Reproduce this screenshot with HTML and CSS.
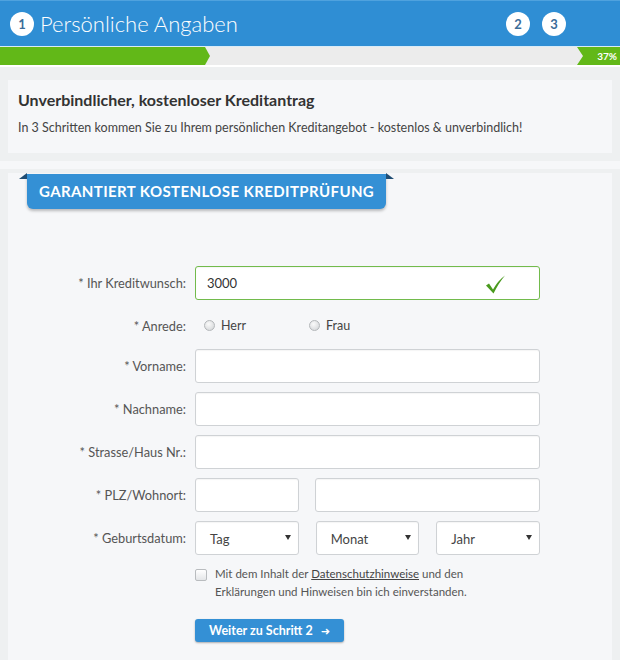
FILE: index.html
```html
<!DOCTYPE html>
<html>
<head>
  <meta charset="utf-8">
  <link rel="stylesheet" href="styles.css">
</head>
<body>
  <header class="steps">
    <span class="step-num">1</span>
    <h1 class="step-title">Persönliche Angaben</h1>
    <div class="step-next">
      <span class="step-num">2</span>
      <span class="step-num">3</span>
    </div>
  </header>

  <div class="progress">
    <div class="progress-fill" style="width: 210px"></div>
    <div class="progress-tag">37%</div>
  </div>

  <section class="intro-wrap">
    <div class="intro-card">
      <h2>Unverbindlicher, kostenloser Kreditantrag</h2>
      <p>In 3 Schritten kommen Sie zu Ihrem persönlichen Kreditangebot - kostenlos &amp; unverbindlich!</p>
    </div>
  </section>

  <section class="form-wrap">
    <div class="form-card">
      <div class="ribbon">Garantiert kostenlose Kreditprüfung</div>

      <form class="credit-form">
        <div class="row">
          <label class="row-label">* Ihr Kreditwunsch:</label>
          <div class="field">
            <div class="input valid">
              <span>3000</span>
              <svg class="check" width="22" height="21" viewBox="0 0 22 20">
                <path d="M2 11 L5 9 L9 15 Q14 6 21 1 Q15 8 9.5 19 Z" fill="#4a9a1e"/>
              </svg>
            </div>
          </div>
        </div>

        <div class="row row-radio">
          <label class="row-label">* Anrede:</label>
          <div class="field radios">
            <span class="radio-opt"><span class="radio"></span>Herr</span>
            <span class="radio-opt"><span class="radio"></span>Frau</span>
          </div>
        </div>

        <div class="row">
          <label class="row-label">* Vorname:</label>
          <div class="field"><div class="input"></div></div>
        </div>

        <div class="row">
          <label class="row-label">* Nachname:</label>
          <div class="field"><div class="input"></div></div>
        </div>

        <div class="row">
          <label class="row-label">* Strasse/Haus Nr.:</label>
          <div class="field"><div class="input"></div></div>
        </div>

        <div class="row">
          <label class="row-label">* PLZ/Wohnort:</label>
          <div class="field plz">
            <div class="input"></div>
            <div class="input"></div>
          </div>
        </div>

        <div class="row">
          <label class="row-label">* Geburtsdatum:</label>
          <div class="field dates">
            <div class="input select">Tag</div>
            <div class="input select">Monat</div>
            <div class="input select">Jahr</div>
          </div>
        </div>

        <div class="row row-check">
          <span></span>
          <div class="field consent">
            <span class="checkbox"></span>
            <p>Mit dem Inhalt der <a href="#">Datenschutzhinweise</a> und den Erklärungen und Hinweisen bin ich einverstanden.</p>
          </div>
        </div>

        <div class="row row-submit">
          <span></span>
          <div class="field">
            <button type="button" class="btn-next">Weiter zu Schritt 2 <span class="arrow">&#10140;</span></button>
          </div>
        </div>
      </form>
    </div>
  </section>
</body>
</html>
```

FILE: styles.css
```css
* {
  margin: 0;
  padding: 0;
  box-sizing: border-box;
}

body {
  font-family: Lato, "Open Sans", sans-serif;
  color: #444;
  background: #f6f7f9;
  width: 620px;
  overflow: hidden;
}

/* step header */
.steps {
  height: 47px;
  display: flex;
  align-items: center;
  padding: 0 10px;
  background: #2f8ed4;
  border-top: 1px solid #4fa2de;
  border-bottom: 1px solid #d9ebf7;
}

.step-num {
  width: 24px;
  height: 24px;
  border-radius: 50%;
  background: #fff;
  color: #3b6c99;
  font-size: 13px;
  font-weight: 700;
  display: flex;
  align-items: center;
  justify-content: center;
}

.step-title {
  margin-left: 6px;
  font-size: 22px;
  font-weight: 300;
  color: #fff;
}

.step-next {
  margin-left: auto;
  margin-right: 44px;
  display: flex;
  gap: 12px;
}

/* progress */
.progress {
  height: 18px;
  background: #ececec;
  display: flex;
  justify-content: space-between;
}

.progress-fill {
  background: #62b818;
  clip-path: polygon(0 0, calc(100% - 5px) 0, 100% 50%, calc(100% - 5px) 100%, 0 100%);
}

.progress-tag {
  width: 43px;
  background: #62b818;
  color: #fff;
  font-size: 10px;
  font-weight: 700;
  line-height: 18px;
  text-align: right;
  padding-right: 3px;
  clip-path: polygon(0 0, 100% 0, 100% 100%, 0 100%, 6px 50%);
}

/* intro */
.intro-wrap {
  background: #eef0f1;
  padding: 13px 8px 8px;
  border-top: 2px solid #fff;
}

.intro-card {
  background: #f6f7f9;
  padding: 10px 10px 16px;
}

.intro-card h2 {
  font-size: 16px;
  font-weight: 700;
  line-height: 20px;
  color: #333;
}

.intro-card p {
  margin-top: 9px;
  font-size: 12.5px;
  line-height: 18px;
  color: #444;
}

/* form */
.form-wrap {
  margin-top: 8px;
  background: #eef0f1;
  padding: 4px 8px 0;
}

.form-card {
  background: #f6f7f9;
  padding-top: 1px;
  height: 500px;
}

.ribbon {
  position: relative;
  display: inline-block;
  margin-left: 19px;
  height: 35px;
  line-height: 35px;
  padding: 0 12px;
  background: #3490d5;
  color: #fff;
  font-size: 15px;
  font-weight: 700;
  letter-spacing: 0.4px;
  text-transform: uppercase;
  border-radius: 0 0 6px 6px;
  box-shadow: 0 2px 3px rgba(0, 0, 0, 0.25);
}

.ribbon::before,
.ribbon::after {
  content: '';
  position: absolute;
  top: -1px;
  border-bottom: 6px solid #1f4d74;
}

.ribbon::before {
  left: -8px;
  border-left: 8px solid transparent;
}

.ribbon::after {
  right: -8px;
  border-right: 8px solid transparent;
}

.credit-form {
  margin-top: 57px;
}

.row {
  display: grid;
  grid-template-columns: 178px 345px;
  column-gap: 9px;
  align-items: center;
  margin-bottom: 9px;
}

.row-label {
  text-align: right;
  font-size: 12.8px;
  color: #555;
}

.input {
  height: 34px;
  background: #fff;
  border: 1px solid #cfd2d5;
  border-radius: 3px;
  box-shadow: inset 0 1px 1px rgba(0, 0, 0, 0.04);
  display: flex;
  align-items: center;
  padding-left: 11px;
  font-size: 13px;
  color: #333;
}

.input.valid {
  border-color: #72bb4c;
  justify-content: space-between;
  padding-right: 33px;
}

.check {
  margin-top: 3px;
}

.row-radio {
  height: 31px;
  margin-top: 10px;
  margin-bottom: 8px;
}

.radios {
  display: flex;
  padding-left: 9px;
  font-size: 12.5px;
  color: #444;
}

.radio-opt {
  width: 105px;
  display: flex;
  align-items: center;
  gap: 6px;
}

.radio {
  width: 11px;
  height: 11px;
  border-radius: 50%;
  border: 1px solid #b4b7ba;
  background: radial-gradient(circle at 40% 35%, #fafafa, #cfd2d5);
}

.plz {
  display: grid;
  grid-template-columns: 104px 1fr;
  column-gap: 16px;
}

.dates {
  display: grid;
  grid-template-columns: 1fr 1fr 1fr;
  column-gap: 17px;
}

.select {
  position: relative;
  padding-left: 14px;
  padding-top: 2px;
  color: #444;
}

.select::after {
  content: '';
  position: absolute;
  right: 7px;
  top: 13px;
  border-top: 5px solid #333;
  border-left: 3px solid transparent;
  border-right: 3px solid transparent;
}

.row-check {
  align-items: start;
  margin-top: 10px;
}

.consent {
  display: flex;
  gap: 8px;
}

.checkbox {
  flex: none;
  width: 12px;
  height: 12px;
  margin-top: 4px;
  border: 1px solid #b9bcbf;
  border-radius: 2px;
  background: linear-gradient(#fff, #e4e6e8);
}

.consent p {
  font-size: 11.5px;
  line-height: 18px;
  color: #555;
  width: 270px;
}

.consent a {
  color: #444;
  text-decoration: underline;
}

.row-submit {
  margin-top: 18px;
}

.btn-next {
  width: 149px;
  height: 23px;
  border: none;
  border-radius: 3px;
  background: #3490d5;
  box-shadow: 0 1px 2px rgba(0, 0, 0, 0.3);
  color: #fff;
  font-family: Lato, sans-serif;
  font-size: 12.5px;
  font-weight: 700;
}

.btn-next .arrow {
  margin-left: 5px;
  font-family: "DejaVu Sans", sans-serif;
  font-size: 11px;
}
```
